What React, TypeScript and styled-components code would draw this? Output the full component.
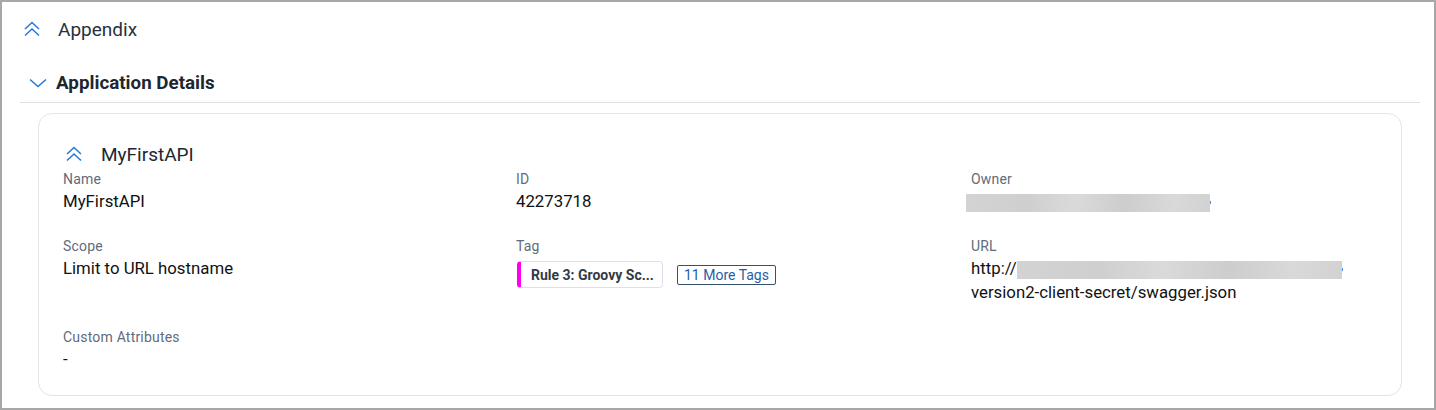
import React from "react";
import styled, { createGlobalStyle } from "styled-components";

const GlobalStyle = createGlobalStyle`
  html, body { margin: 0; padding: 0; background: #ffffff; }
  body { font-family: Roboto, "Noto Sans", Arial, sans-serif; }
  * { box-sizing: border-box; }
`;

const Frame = styled.div`
  width: 1436px;
  height: 410px;
  border: 2px solid #a7a7a7;
  padding: 0 14px 0 18px;
  background: #fff;
  overflow: hidden;
`;

const SectionRow = styled.div`
  display: flex;
  align-items: center;
  height: 56px;
  padding-left: 3px;
  padding-bottom: 2px;
  gap: 17px;
`;

const SectionTitle = styled.span`
  font-size: 19px;
  color: #26313c;
  font-weight: 400;
`;

const SubSectionRow = styled.div`
  display: flex;
  align-items: center;
  margin-top: 6px;
  height: 39px;
  padding-left: 9px;
  gap: 9px;
  border-bottom: 1px solid #dde3e9;
`;

const SubSectionTitle = styled.span`
  font-size: 18.8px;
  font-weight: 700;
  color: #1d2731;
`;

const Card = styled.div`
  margin: 10px 18px 0 18px;
  border: 1px solid #dfe5eb;
  border-radius: 14px;
  padding: 26px 24px 24px 26px;
`;

const CardHeader = styled.div`
  display: flex;
  align-items: center;
  height: 28px;
  gap: 18px;
`;

const CardTitle = styled.span`
  font-size: 19px;
  color: #1d2731;
`;

const FieldGrid = styled.div`
  display: grid;
  grid-template-columns: 453px 455px 1fr;
  row-gap: 25px;
  margin-top: 3px;
  margin-left: -2px;
`;

const Field = styled.div`
  display: flex;
  flex-direction: column;
`;

const Label = styled.div`
  font-size: 14px;
  letter-spacing: 0.2px;
  line-height: 16px;
  color: #5f6c7b;
  margin-bottom: 2px;
`;

const Value = styled.div`
  font-size: 16.8px;
  line-height: 24px;
  color: #111111;
`;

const Redacted = styled.span<{ $w: number }>`
  display: inline-block;
  width: ${(p) => p.$w}px;
  height: 18px;
  vertical-align: middle;
  background: linear-gradient(
    90deg,
    #d3d3d3 0%,
    #cfcfcf 25%,
    #dadada 45%,
    #cdcdcd 65%,
    #d9d9d9 85%,
    #d2d2d2 100%
  );
`;

const OwnerValue = styled(Value)`
  margin-left: -5px;
`;

const Dot = styled.span`
  display: inline-block;
  width: 1px;
  height: 3px;
  background: #4a90d9;
  vertical-align: middle;
`;

const TagRow = styled.div`
  display: flex;
  align-items: center;
  gap: 14px;
  margin-top: 5px;
  margin-left: 1px;
`;

const TagChip = styled.div`
  display: flex;
  align-items: center;
  height: 27px;
  width: 146px;
  border: 1px solid #e3dcee;
  border-left: 4px solid #ff00ee;
  border-radius: 4px;
  padding-left: 10px;
  font-size: 14px;
  font-weight: 700;
  color: #333b44;
  white-space: nowrap;
  overflow: hidden;
`;

const MoreTags = styled.div`
  display: flex;
  align-items: center;
  height: 20px;
  padding: 0 6px;
  border: 1px solid #34516e;
  border-radius: 2px;
  font-size: 14px;
  color: #1f5fa8;
`;

const Chevrons = ({ double, down }: { double?: boolean; down?: boolean }) => (
  <svg width="18" height="16" viewBox="0 0 18 16" fill="none">
    {down ? (
      <path d="M1 4.5 L9 11.5 L17 4.5" stroke="#2a7ad6" strokeWidth="1.6" />
    ) : double ? (
      <>
        <path d="M2 8 L9 1.5 L16 8" stroke="#2a7ad6" strokeWidth="1.6" />
        <path d="M2 14.5 L9 8 L16 14.5" stroke="#2a7ad6" strokeWidth="1.6" />
      </>
    ) : null}
  </svg>
);

export default function App() {
  return (
    <>
      <GlobalStyle />
      <Frame>
        <SectionRow>
          <Chevrons double />
          <SectionTitle>Appendix</SectionTitle>
        </SectionRow>
        <SubSectionRow>
          <Chevrons down />
          <SubSectionTitle>Application Details</SubSectionTitle>
        </SubSectionRow>
        <Card>
          <CardHeader>
            <Chevrons double />
            <CardTitle>MyFirstAPI</CardTitle>
          </CardHeader>
          <FieldGrid>
            <Field>
              <Label>Name</Label>
              <Value>MyFirstAPI</Value>
            </Field>
            <Field>
              <Label>ID</Label>
              <Value>42273718</Value>
            </Field>
            <Field>
              <Label>Owner</Label>
              <OwnerValue>
                <Redacted $w={244} />
                <Dot />
              </OwnerValue>
            </Field>
            <Field>
              <Label>Scope</Label>
              <Value>Limit to URL hostname</Value>
            </Field>
            <Field>
              <Label>Tag</Label>
              <TagRow>
                <TagChip>Rule 3: Groovy Sc...</TagChip>
                <MoreTags>11 More Tags</MoreTags>
              </TagRow>
            </Field>
            <Field>
              <Label>URL</Label>
              <Value>
                http://
                <Redacted $w={325} />
                <Dot />
                <br />
                version2-client-secret/swagger.json
              </Value>
            </Field>
            <Field>
              <Label>Custom Attributes</Label>
              <Value>-</Value>
            </Field>
          </FieldGrid>
        </Card>
      </Frame>
    </>
  );
}
